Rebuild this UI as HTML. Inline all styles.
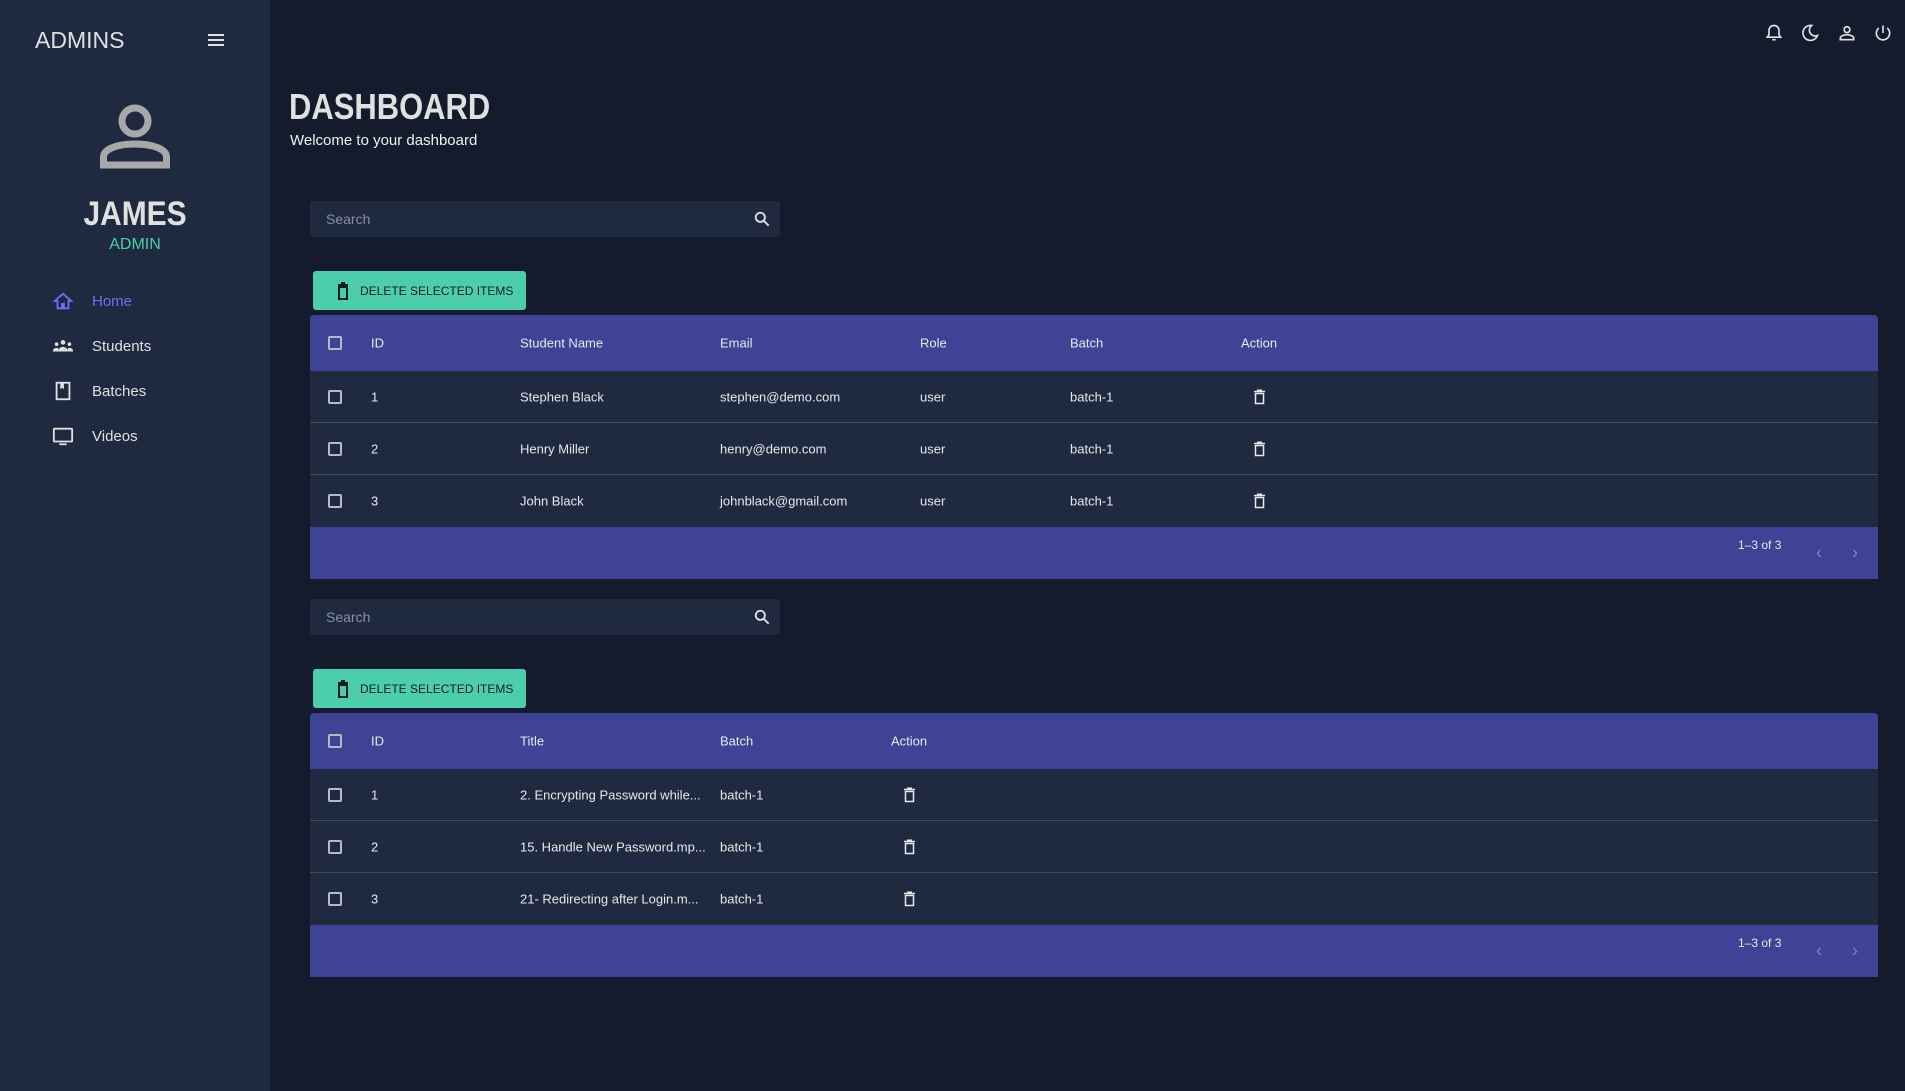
<!DOCTYPE html>
<html><head><meta charset="utf-8"><style>
*{margin:0;padding:0;box-sizing:border-box}
body{width:1905px;height:1091px;background:#141b2d;font-family:"Liberation Sans",sans-serif;color:#e0e0e0;position:relative;overflow:hidden}
.abs{position:absolute}
.side{left:0;top:0;width:270px;height:1091px;background:#1f2a40}
.nav{position:absolute;left:52px;font-size:15px;color:#e0e0e0;display:flex;align-items:center}
.nav svg{width:22px;height:22px;margin-right:18px}
.search{position:absolute;left:310px;width:470px;height:36px;background:#1f2a40;border-radius:3px}
.search span{position:absolute;left:16px;top:10px;font-size:14px;color:#8a8f9c}
.search svg{position:absolute;right:8px;top:8px}
.btn{position:absolute;left:313px;width:213px;height:39px;background:#4cceac;border-radius:3px;color:#141b2d;font-size:12px;display:flex;align-items:center;padding-left:24px}
.btn svg{margin-right:11px}
.tbl{position:absolute;left:310px;width:1568px}
.hd{height:56px;background:#3e4396;border-radius:4px 4px 0 0;position:relative}
.row{height:52px;background:#1f2a40;position:relative;border-bottom:1px solid #4a4a4a}
.row.last{border-bottom:none}
.ft{height:52px;background:#3e4396;position:relative}
.c{position:absolute;top:50%;transform:translateY(-50%);font-size:13px;color:#e8e8e8;white-space:nowrap}
.cb{position:absolute;left:18px;top:50%;margin-top:-7px;width:14px;height:14px;border:2px solid #b8b8c8;border-radius:2px}
</style></head><body>
<div class="abs side"></div>
<div class="abs" style="left:35px;top:27px;font-size:23px;color:#e0e0e0">ADMINS</div>
<svg class="abs" style="left:207px;top:33px" width="18" height="14" viewBox="0 0 18 14"><path d="M1 2h16M1 7h16M1 12h16" stroke="#e0e0e0" stroke-width="2"/></svg>
<svg class="abs" style="left:100px;top:103px" width="70" height="66" viewBox="0 0 70 66"><circle cx="35" cy="18" r="13" fill="none" stroke="#a8a8a8" stroke-width="7"/><path d="M3.5 62V54c0-8 14-13 31.5-13S66.5 46 66.5 54v8z" fill="none" stroke="#a8a8a8" stroke-width="7"/></svg>
<div class="abs" style="left:0;width:270px;top:195px;text-align:center;font-size:34px;font-weight:bold;color:#e0e0e0;transform:scaleX(0.88)">JAMES</div>
<div class="abs" style="left:0;width:270px;top:236px;text-align:center;font-size:16px;color:#4cceac">ADMIN</div>
<div class="nav" style="top:290px;color:#6870fa"><svg viewBox="0 0 24 24"><path d="M12 4L3 12h3v8h5v-5h2v5h5v-8h3z" fill="none" stroke="#6870fa" stroke-width="2"/></svg>Home</div>
<div class="nav" style="top:335px"><svg viewBox="0 0 24 24"><circle cx="12" cy="8" r="2.5" fill="#e0e0e0"/><circle cx="5" cy="10" r="2" fill="#e0e0e0"/><circle cx="19" cy="10" r="2" fill="#e0e0e0"/><path d="M7 18c0-3 2-5 5-5s5 2 5 5zM1 18c0-2 1-4 4-4 1 0 2 .3 2 1v3zM23 18c0-2-1-4-4-4-1 0-2 .3-2 1v3z" fill="#e0e0e0"/></svg>Students</div>
<div class="nav" style="top:380px"><svg viewBox="0 0 24 24"><rect x="5" y="3" width="14" height="18" fill="none" stroke="#e0e0e0" stroke-width="2"/><path d="M9 3v7l2-1.5 2 1.5V3" fill="#e0e0e0"/></svg>Batches</div>
<div class="nav" style="top:425px"><svg viewBox="0 0 24 24"><rect x="2" y="4" width="20" height="14" rx="1" fill="none" stroke="#e0e0e0" stroke-width="2"/><path d="M8 21h8" stroke="#e0e0e0" stroke-width="2"/></svg>Videos</div>

<svg class="abs" style="left:1764px;top:22px" width="20" height="22" viewBox="0 0 24 24"><path d="M12 3c-3.5 0-6 2.5-6 6v5l-2 3h16l-2-3V9c0-3.5-2.5-6-6-6zM10 20h4" fill="none" stroke="#e0e0e0" stroke-width="2"/></svg>
<svg class="abs" style="left:1800px;top:22px" width="20" height="22" viewBox="0 0 24 24"><path d="M14 3a9 9 0 1 0 7 12A7 7 0 0 1 14 3z" fill="none" stroke="#e0e0e0" stroke-width="2"/></svg>
<svg class="abs" style="left:1837px;top:22px" width="20" height="22" viewBox="0 0 24 24"><circle cx="12" cy="8" r="3.5" fill="none" stroke="#e0e0e0" stroke-width="2"/><path d="M4 20v-2c0-2 4-4 8-4s8 2 8 4v2z" fill="none" stroke="#e0e0e0" stroke-width="2"/></svg>
<svg class="abs" style="left:1873px;top:22px" width="20" height="22" viewBox="0 0 24 24"><path d="M12 3v9M7 6a8 8 0 1 0 10 0" fill="none" stroke="#e0e0e0" stroke-width="2"/></svg>

<div class="abs" style="left:289px;top:86px;font-size:36px;font-weight:bold;color:#e0e0e0;transform:scaleX(0.86);transform-origin:left">DASHBOARD</div>
<div class="abs" style="left:290px;top:132px;font-size:15px;color:#f0f0f0">Welcome to your dashboard</div>

<div class="search" style="top:201px"><span>Search</span><svg width="20" height="20" viewBox="0 0 24 24"><circle cx="10" cy="10" r="5.5" fill="none" stroke="#e0e0e0" stroke-width="2.2"/><path d="M14 14l6 6" stroke="#e0e0e0" stroke-width="2.2"/></svg></div>
<div class="btn" style="top:271px"><svg width="12" height="18" viewBox="0 0 12 18"><path d="M1 3h10M4 1h4" stroke="#141b2d" stroke-width="2"/><rect x="2" y="5" width="8" height="12" fill="none" stroke="#141b2d" stroke-width="2"/></svg>DELETE SELECTED ITEMS</div>

<div class="tbl" style="top:315px">
<div class="hd"><div class="cb"></div><div class="c" style="left:61px">ID</div><div class="c" style="left:210px">Student Name</div><div class="c" style="left:410px">Email</div><div class="c" style="left:610px">Role</div><div class="c" style="left:760px">Batch</div><div class="c" style="left:931px">Action</div></div>
<div class="row"><div class="cb"></div><div class="c" style="left:61px">1</div><div class="c" style="left:210px">Stephen Black</div><div class="c" style="left:410px">stephen@demo.com</div><div class="c" style="left:610px">user</div><div class="c" style="left:760px">batch-1</div><svg class="c" style="left:944px" width="11" height="15" viewBox="0 0 11 15"><path d="M0 2h11M3 .7h5" stroke="#e8e8e8" stroke-width="1.5"/><rect x="1.5" y="4" width="8" height="10" fill="none" stroke="#e8e8e8" stroke-width="1.5"/></svg></div>
<div class="row"><div class="cb"></div><div class="c" style="left:61px">2</div><div class="c" style="left:210px">Henry Miller</div><div class="c" style="left:410px">henry@demo.com</div><div class="c" style="left:610px">user</div><div class="c" style="left:760px">batch-1</div><svg class="c" style="left:944px" width="11" height="15" viewBox="0 0 11 15"><path d="M0 2h11M3 .7h5" stroke="#e8e8e8" stroke-width="1.5"/><rect x="1.5" y="4" width="8" height="10" fill="none" stroke="#e8e8e8" stroke-width="1.5"/></svg></div>
<div class="row last"><div class="cb"></div><div class="c" style="left:61px">3</div><div class="c" style="left:210px">John Black</div><div class="c" style="left:410px">johnblack@gmail.com</div><div class="c" style="left:610px">user</div><div class="c" style="left:760px">batch-1</div><svg class="c" style="left:944px" width="11" height="15" viewBox="0 0 11 15"><path d="M0 2h11M3 .7h5" stroke="#e8e8e8" stroke-width="1.5"/><rect x="1.5" y="4" width="8" height="10" fill="none" stroke="#e8e8e8" stroke-width="1.5"/></svg></div>
<div class="ft"><div class="c" style="left:1428px;top:18px;font-size:12px">1–3 of 3</div><div class="c" style="left:1506px;top:26px;color:#7f84c0;font-size:18px">‹</div><div class="c" style="left:1542px;top:26px;color:#7f84c0;font-size:18px">›</div></div>
</div>

<div class="search" style="top:599px"><span>Search</span><svg width="20" height="20" viewBox="0 0 24 24"><circle cx="10" cy="10" r="5.5" fill="none" stroke="#e0e0e0" stroke-width="2.2"/><path d="M14 14l6 6" stroke="#e0e0e0" stroke-width="2.2"/></svg></div>
<div class="btn" style="top:669px"><svg width="12" height="18" viewBox="0 0 12 18"><path d="M1 3h10M4 1h4" stroke="#141b2d" stroke-width="2"/><rect x="2" y="5" width="8" height="12" fill="none" stroke="#141b2d" stroke-width="2"/></svg>DELETE SELECTED ITEMS</div>

<div class="tbl" style="top:713px">
<div class="hd"><div class="cb"></div><div class="c" style="left:61px">ID</div><div class="c" style="left:210px">Title</div><div class="c" style="left:410px">Batch</div><div class="c" style="left:581px">Action</div></div>
<div class="row"><div class="cb"></div><div class="c" style="left:61px">1</div><div class="c" style="left:210px">2. Encrypting Password while...</div><div class="c" style="left:410px">batch-1</div><svg class="c" style="left:594px" width="11" height="15" viewBox="0 0 11 15"><path d="M0 2h11M3 .7h5" stroke="#e8e8e8" stroke-width="1.5"/><rect x="1.5" y="4" width="8" height="10" fill="none" stroke="#e8e8e8" stroke-width="1.5"/></svg></div>
<div class="row"><div class="cb"></div><div class="c" style="left:61px">2</div><div class="c" style="left:210px">15. Handle New Password.mp...</div><div class="c" style="left:410px">batch-1</div><svg class="c" style="left:594px" width="11" height="15" viewBox="0 0 11 15"><path d="M0 2h11M3 .7h5" stroke="#e8e8e8" stroke-width="1.5"/><rect x="1.5" y="4" width="8" height="10" fill="none" stroke="#e8e8e8" stroke-width="1.5"/></svg></div>
<div class="row last"><div class="cb"></div><div class="c" style="left:61px">3</div><div class="c" style="left:210px">21- Redirecting after Login.m...</div><div class="c" style="left:410px">batch-1</div><svg class="c" style="left:594px" width="11" height="15" viewBox="0 0 11 15"><path d="M0 2h11M3 .7h5" stroke="#e8e8e8" stroke-width="1.5"/><rect x="1.5" y="4" width="8" height="10" fill="none" stroke="#e8e8e8" stroke-width="1.5"/></svg></div>
<div class="ft"><div class="c" style="left:1428px;top:18px;font-size:12px">1–3 of 3</div><div class="c" style="left:1506px;top:26px;color:#7f84c0;font-size:18px">‹</div><div class="c" style="left:1542px;top:26px;color:#7f84c0;font-size:18px">›</div></div>
</div>
</body></html>
